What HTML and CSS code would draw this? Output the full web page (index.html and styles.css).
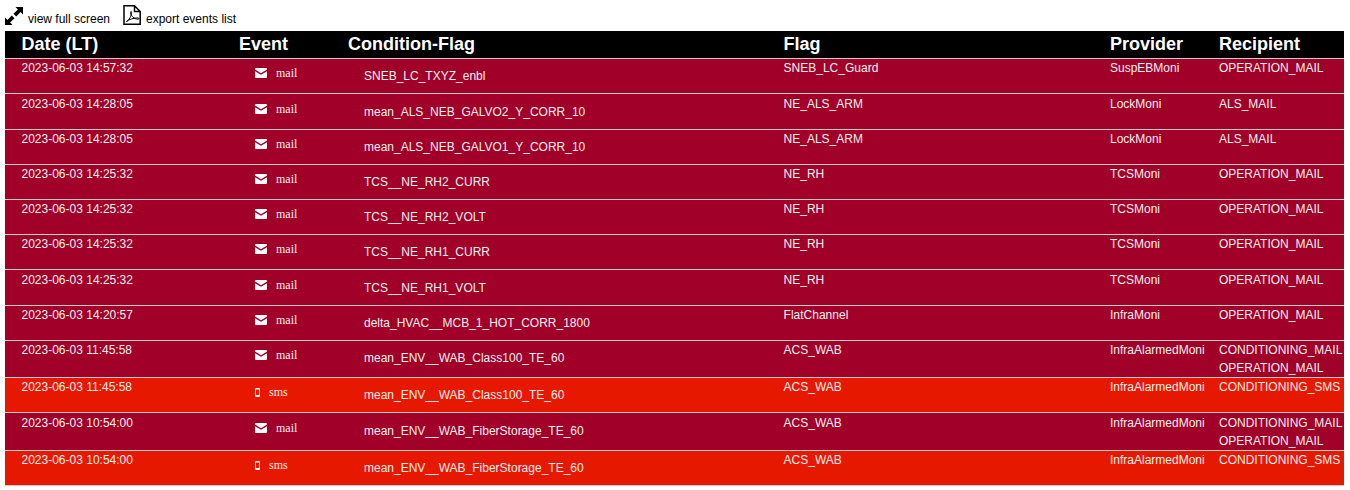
FILE: index.html
```html
<!DOCTYPE html>
<html lang="en">
<head>
<meta charset="utf-8">
<title>Events</title>
<link rel="stylesheet" href="styles.css">
</head>
<body>
<svg class="sprites" width="0" height="0" aria-hidden="true">
  <symbol id="i-mail" viewBox="0 0 12 10">
    <path d="M0 1 Q0 0 1 0 H11 Q12 0 12 1 V1.6 L6 5.2 L0 1.6 Z"/>
    <path d="M0 3.2 L6 6.8 L12 3.2 V9 Q12 10 11 10 H1 Q0 10 0 9 Z"/>
  </symbol>
  <symbol id="i-sms" viewBox="0 0 5 9">
    <path fill-rule="evenodd" d="M1 0 H4 Q5 0 5 1 V8 Q5 9 4 9 H1 Q0 9 0 8 V1 Q0 0 1 0 Z M1 1.4 V7 H4 V1.4 Z"/>
  </symbol>
</svg>
<div class="toolbar">
  <a class="tool tool-full">
    <svg class="ico-full" viewBox="0 0 18 18" width="18" height="18"><path d="M10.5 0 H18 V7.5 L15.6 5.1 L11.2 9.5 L8.5 6.8 L12.9 2.4 Z"/><path d="M7.5 18 H0 V10.5 L2.4 12.9 L6.8 8.5 L9.5 11.2 L5.1 15.6 Z"/></svg>
    <span>view full screen</span>
  </a>
  <a class="tool tool-pdf">
    <svg class="ico-pdf" viewBox="0 0 18 20" width="18" height="20"><path class="pdf-line" d="M1 .8 H11.5 L17.2 6.5 V19.2 H1 Z M11.5 .8 V6.5 H17.2"/><path class="pdf-thin" d="M3.5 16.5 C6 15.5 8.5 10.5 8.6 7.5 C8.6 6 7.5 6 7.6 7.8 C8 11 11 14 15 14.2 C16.5 14.2 16.3 12.9 14.8 12.9 C11 12.9 5.5 14.5 3.5 16.5 Z"/></svg>
    <span>export events list</span>
  </a>
</div>
<table class="events">
  <colgroup>
    <col class="c-date"><col class="c-event"><col class="c-cond"><col class="c-flag"><col class="c-prov"><col class="c-rec">
  </colgroup>
  <thead>
    <tr><th class="first">Date (LT)</th><th>Event</th><th>Condition-Flag</th><th>Flag</th><th>Provider</th><th>Recipient</th></tr>
  </thead>
  <tbody>
    <tr class="mail"><td class="first">2023-06-03 14:57:32</td><td class="ev"><svg class="im"><use href="#i-mail"/></svg><span>mail</span></td><td class="cond"><div>SNEB_LC_TXYZ_enbl</div></td><td>SNEB_LC_Guard</td><td>SuspEBMoni</td><td>OPERATION_MAIL</td></tr>
    <tr class="mail"><td class="first">2023-06-03 14:28:05</td><td class="ev"><svg class="im"><use href="#i-mail"/></svg><span>mail</span></td><td class="cond"><div>mean_ALS_NEB_GALVO2_Y_CORR_10</div></td><td>NE_ALS_ARM</td><td>LockMoni</td><td>ALS_MAIL</td></tr>
    <tr class="mail"><td class="first">2023-06-03 14:28:05</td><td class="ev"><svg class="im"><use href="#i-mail"/></svg><span>mail</span></td><td class="cond"><div>mean_ALS_NEB_GALVO1_Y_CORR_10</div></td><td>NE_ALS_ARM</td><td>LockMoni</td><td>ALS_MAIL</td></tr>
    <tr class="mail"><td class="first">2023-06-03 14:25:32</td><td class="ev"><svg class="im"><use href="#i-mail"/></svg><span>mail</span></td><td class="cond"><div>TCS__NE_RH2_CURR</div></td><td>NE_RH</td><td>TCSMoni</td><td>OPERATION_MAIL</td></tr>
    <tr class="mail"><td class="first">2023-06-03 14:25:32</td><td class="ev"><svg class="im"><use href="#i-mail"/></svg><span>mail</span></td><td class="cond"><div>TCS__NE_RH2_VOLT</div></td><td>NE_RH</td><td>TCSMoni</td><td>OPERATION_MAIL</td></tr>
    <tr class="mail"><td class="first">2023-06-03 14:25:32</td><td class="ev"><svg class="im"><use href="#i-mail"/></svg><span>mail</span></td><td class="cond"><div>TCS__NE_RH1_CURR</div></td><td>NE_RH</td><td>TCSMoni</td><td>OPERATION_MAIL</td></tr>
    <tr class="mail"><td class="first">2023-06-03 14:25:32</td><td class="ev"><svg class="im"><use href="#i-mail"/></svg><span>mail</span></td><td class="cond"><div>TCS__NE_RH1_VOLT</div></td><td>NE_RH</td><td>TCSMoni</td><td>OPERATION_MAIL</td></tr>
    <tr class="mail"><td class="first">2023-06-03 14:20:57</td><td class="ev"><svg class="im"><use href="#i-mail"/></svg><span>mail</span></td><td class="cond"><div>delta_HVAC__MCB_1_HOT_CORR_1800</div></td><td>FlatChannel</td><td>InfraMoni</td><td>OPERATION_MAIL</td></tr>
    <tr class="mail"><td class="first">2023-06-03 11:45:58</td><td class="ev"><svg class="im"><use href="#i-mail"/></svg><span>mail</span></td><td class="cond"><div>mean_ENV__WAB_Class100_TE_60</div></td><td>ACS_WAB</td><td>InfraAlarmedMoni</td><td>CONDITIONING_MAIL<br>OPERATION_MAIL</td></tr>
    <tr class="sms"><td class="first">2023-06-03 11:45:58</td><td class="ev"><svg class="is"><use href="#i-sms"/></svg><span>sms</span></td><td class="cond"><div>mean_ENV__WAB_Class100_TE_60</div></td><td>ACS_WAB</td><td>InfraAlarmedMoni</td><td>CONDITIONING_SMS</td></tr>
    <tr class="mail"><td class="first">2023-06-03 10:54:00</td><td class="ev"><svg class="im"><use href="#i-mail"/></svg><span>mail</span></td><td class="cond"><div>mean_ENV__WAB_FiberStorage_TE_60</div></td><td>ACS_WAB</td><td>InfraAlarmedMoni</td><td>CONDITIONING_MAIL<br>OPERATION_MAIL</td></tr>
    <tr class="sms"><td class="first">2023-06-03 10:54:00</td><td class="ev"><svg class="is"><use href="#i-sms"/></svg><span>sms</span></td><td class="cond"><div>mean_ENV__WAB_FiberStorage_TE_60</div></td><td>ACS_WAB</td><td>InfraAlarmedMoni</td><td>CONDITIONING_SMS</td></tr>
  </tbody>
</table>
</body>
</html>
```
FILE: styles.css
```css
html, body { margin: 0; background: #fff; }
body { padding: 0 6px 0 5px; font-family: "Liberation Sans", Arial, sans-serif; font-size: 12px; color: #000; overflow: hidden; }
.sprites { position: absolute; }
.toolbar { display: flex; align-items: flex-end; height: 26px; padding-bottom: 5px; }
.tool { display: flex; align-items: flex-end; line-height: 14px; }
.tool svg { margin-bottom: 1px; }
.tool-full { width: 118px; }
.ico-full { margin-right: 5px; }
.ico-pdf { margin-right: 5px; }
.pdf-line { fill: none; stroke: #000; stroke-width: 1.5; }
.pdf-thin { fill: none; stroke: #000; stroke-width: 1; }
.events { width: 1339px; table-layout: fixed; border-collapse: collapse; color: #f2f2f2; }
.c-date { width: 234px; }
.c-event { width: 109px; }
.c-cond { width: 435.6px; }
.c-flag { width: 326.4px; }
.c-prov { width: 109px; }
.c-rec { width: 125px; }
th { background: #000; color: #fff; font-size: 18px; font-weight: bold; text-align: left; height: 27.2px; padding: 0; line-height: 27px; }
td { padding: .25px 0 .05px; vertical-align: top; line-height: 18px; border-top: 1px solid #ccc; white-space: nowrap; }
tbody tr:last-child td { border-bottom: 1px solid #ccc; }
td.first { padding-left: 16.5px; }
th.first { padding-left: 16.5px; }
.mail td { background: #a10028; }
.sms td { background: #e61900; }
td.ev { font-family: "Liberation Serif", "Times New Roman", serif; padding-left: 16px; padding-top: 5.25px; }
.ev svg { fill: #fff; vertical-align: -1px; }
.im { width: 12px; height: 10px; margin-right: 9px; }
.is { width: 5px; height: 9px; margin-right: 9px; }
td.cond { padding-left: 16px; }
.cond div { padding-top: 8px; height: 25.92px; }
```
